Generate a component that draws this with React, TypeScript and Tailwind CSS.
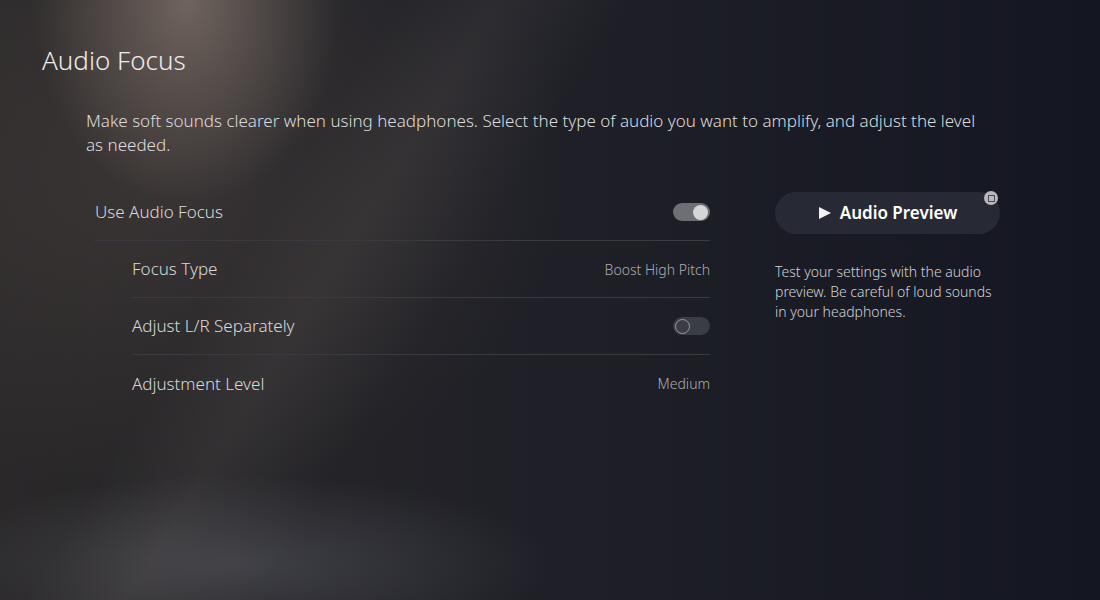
function Toggle({ on }: { on: boolean }) {
  return on ? (
    <div className="flex h-[18px] w-[37px] items-center justify-end rounded-full bg-[#6e6f74] pr-[2px]">
      <div className="h-[15px] w-[15px] rounded-full bg-[#d6d6d6]" />
    </div>
  ) : (
    <div className="flex h-[18px] w-[37px] items-center rounded-full bg-[#3b3d44] pl-[2px]">
      <div className="h-[15px] w-[15px] rounded-full border-[1.5px] border-[#9a9ba0]" />
    </div>
  );
}

function Row({
  label,
  indent,
  right,
  last,
}: {
  label: string;
  indent?: boolean;
  right: React.ReactNode;
  last?: boolean;
}) {
  return (
    <div className={indent ? "pl-[37px]" : ""}>
      <div
        className={
          "flex h-[57px] items-center justify-between " +
          (last ? "" : "border-b border-[#3a3a40]")
        }
      >
        <span className="text-[17px] font-light text-[#d8d8da]">{label}</span>
        {right}
      </div>
    </div>
  );
}

export default function App() {
  return (
    <div
      className="h-[600px] w-[1100px] overflow-hidden bg-[#181a22] bg-[image:radial-gradient(ellipse_14%_34%_at_17%_0%,rgba(175,155,140,0.5),transparent),linear-gradient(122deg,transparent_27%,rgba(230,210,190,0.06)_34%,transparent_43%),radial-gradient(ellipse_28%_15%_at_22%_94%,rgba(100,102,112,0.42),transparent),radial-gradient(ellipse_38%_55%_at_14%_28%,rgba(85,74,70,0.4),transparent),linear-gradient(90deg,#2a2829,#1f2027_50%,#141622)]"
      style={{ fontFamily: '"Noto Sans", "Open Sans", sans-serif' }}
    >
      <div className="flex flex-col pl-[42px] pt-[42px]">
        <h1 className="text-[26px] font-light leading-[36px] text-[#ececec]">Audio Focus</h1>
        <p className="mt-[31px] ml-[44px] w-[895px] text-[17px] font-light leading-[24px] text-[#dcdcde]">
          Make soft sounds clearer when using headphones. Select the type of audio you want to amplify, and adjust the level as needed.
        </p>
        <div className="mt-[27px] ml-[53px] flex gap-[65px]">
          <div className="flex w-[615px] flex-col">
            <Row label="Use Audio Focus" right={<Toggle on />} />
            <Row
              label="Focus Type"
              indent
              right={<span className="text-[14px] font-light text-[#adadb1]">Boost High Pitch</span>}
            />
            <Row label="Adjust L/R Separately" indent right={<Toggle on={false} />} />
            <Row
              label="Adjustment Level"
              indent
              last
              right={<span className="text-[14px] font-light text-[#adadb1]">Medium</span>}
            />
          </div>
          <div className="flex w-[225px] flex-col">
            <div className="relative mt-[8px]">
              <button className="flex h-[42px] w-[225px] items-center justify-center gap-[8px] rounded-full bg-[#272a34] text-[17px] font-semibold text-white">
                <svg width="14" height="14" viewBox="0 0 14 14">
                  <path d="M1 1 L13 7 L1 13 Z" fill="#f2f2f2" />
                </svg>
                Audio Preview
              </button>
              <div className="absolute right-[2px] top-[-1px] flex h-[14px] w-[14px] items-center justify-center rounded-full bg-[#b8b8bc]">
                <div className="h-[7px] w-[7px] border-[1.5px] border-[#4a4b50]" />
              </div>
            </div>
            <p className="mt-[28px] text-[14px] font-light leading-[20px] text-[#d2d2d5]">
              Test your settings with the audio preview. Be careful of loud sounds in your headphones.
            </p>
          </div>
        </div>
      </div>
    </div>
  );
}
